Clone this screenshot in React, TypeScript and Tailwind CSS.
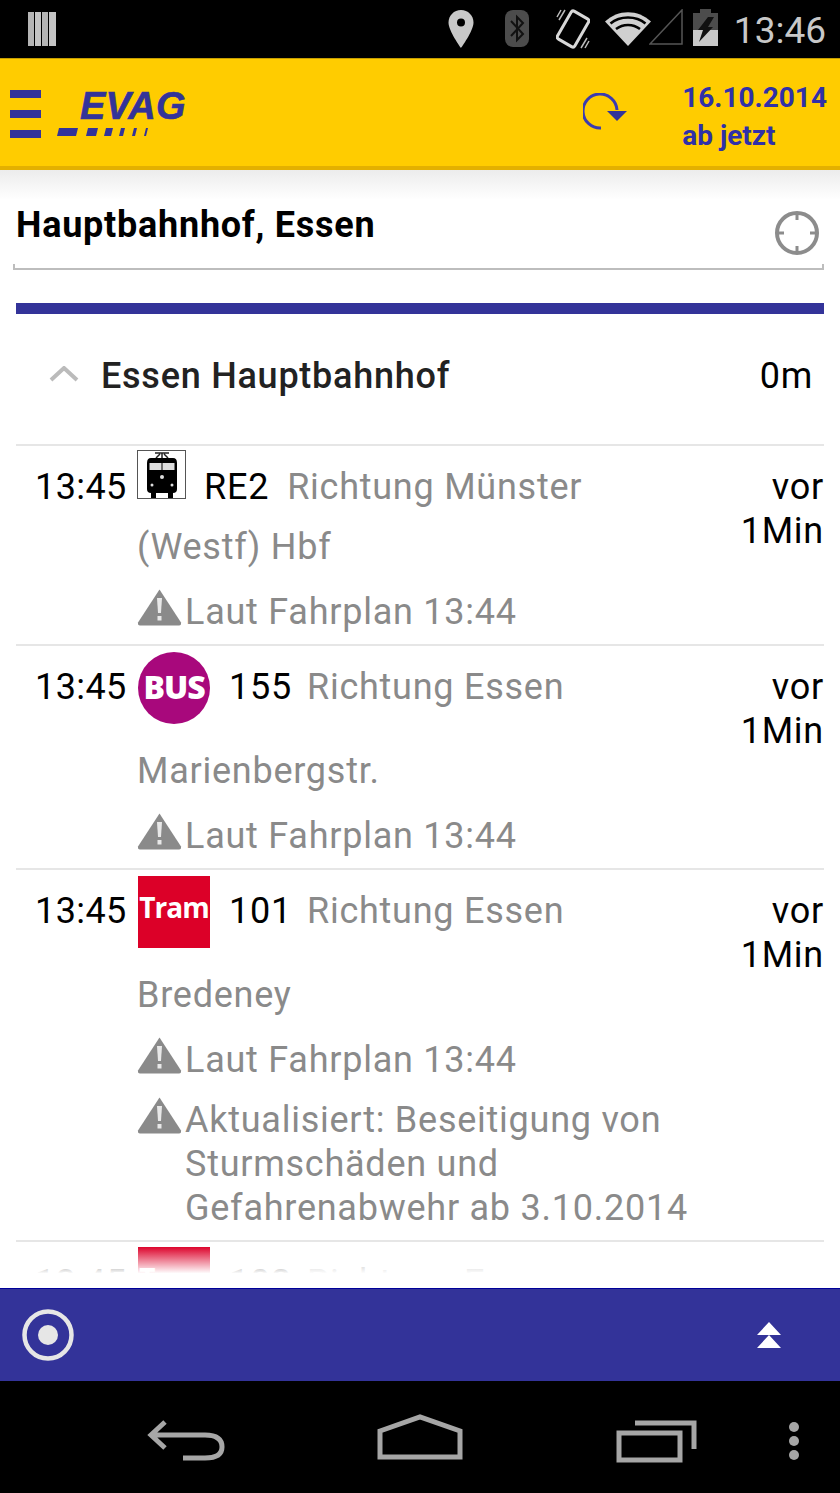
import React from 'react'

const roboto = "font-['Roboto',sans-serif]"

function StatusIcons() {
  return (
    <>
      <svg width="28" height="34" viewBox="0 0 28 34" className="ml-[28px] mt-[12px]">
        <rect x="0" y="0" width="6" height="34" fill="#b5b5b5" />
        <rect x="7" y="0" width="6" height="34" fill="#c4c4c4" />
        <rect x="14" y="0" width="6" height="34" fill="#b5b5b5" />
        <rect x="21" y="0" width="7" height="34" fill="#c4c4c4" />
      </svg>
      <svg width="26" height="38" viewBox="0 0 26 38" className="ml-auto mt-[10px]">
        <path fillRule="evenodd" d="M13 0C6 0 0.5 5.5 0.5 12.500 0.5 21 13 38 13 38S25.500 21 25.500 12.500C25.500 5.500 20 0 13 0ZM13 8.500a4 4 0 1 1 0 8 4 4 0 0 1 0-8Z" fill="#c8c8c8" />
      </svg>
      <svg width="24" height="37" viewBox="0 0 24 37" className="ml-[31px] mt-[10px]">
        <rect width="24" height="37" rx="8" fill="#4c4c4c" />
        <path d="M6 11 L18 24 L12 30 V7 L18 13 L6 26" fill="none" stroke="#111" strokeWidth="2" />
      </svg>
      <svg width="34" height="40" viewBox="0 0 34 40" className="ml-[27px] mt-[9px]">
        <rect x="7" y="4" width="20" height="32" rx="2.500" fill="none" stroke="#d8d8d8" strokeWidth="3" transform="rotate(30 17 20)" />
        <path d="M9 1 L3 11 M5 1 L1 8 M25 39 L31 29 M29 39 L33 32" stroke="#bbb" strokeWidth="1.500" />
      </svg>
      <svg width="46" height="34" viewBox="0 0 46 34" className="ml-[15px] mt-[12px]">
        <path d="M0 9.500 C13 -3 33 -3 46 9.500 L23 34Z" fill="#d0d0d0" />
        <path d="M5.500 11.500 C15 3.500 31 3.500 40.500 11.500 M11 17 C18 11.500 28 11.500 35 17" fill="none" stroke="#000" strokeWidth="2.500" />
      </svg>
      <svg width="34" height="36" viewBox="0 0 34 36" className="mt-[9px] -ml-[2px]">
        <path d="M1 35 L33 1 V35 Z" fill="none" stroke="#555" strokeWidth="1.500" />
      </svg>
      <svg width="25" height="37" viewBox="0 0 25 37" className="ml-[10px] mt-[9px]">
        <rect x="7" y="0" width="11" height="4" fill="#4c4c4c" />
        <rect x="0" y="4" width="25" height="33" fill="#4c4c4c" />
        <rect x="0" y="21" width="25" height="16" fill="#c8c8c8" />
        <path d="M15 8 H21 L15 18 H20 L6 33 L10 21 H5 Z" fill="#111" />
      </svg>
      <span className={`${roboto} text-[37px] leading-[62px] text-[#c8c8c8] ml-[16px] mr-[14px]`}>13:46</span>
    </>
  )
}

function Warning({ lines }: { lines: string[] }) {
  return (
    <div className="flex items-start">
      <svg width="45" height="37" viewBox="0 0 45 37" className="shrink-0 -ml-[1px]">
        <path d="M22.500 0.500 L44 33.500 Q44.500 36.500 42 36.500 H3 Q0.500 36.500 1 33.500 Z" fill="#8a8a8a" />
        <path d="M20 9 H25 L24 24 H21 Z" fill="#e8e8e8" />
        <rect x="20.500" y="27" width="4" height="4.500" fill="#e8e8e8" />
      </svg>
      <div className="ml-[3px] mt-[1px] text-[36px] leading-[44px] tracking-[0.75px] text-[#8a8a8a]">
        {lines.map((line) => (
          <div key={line}>{line}</div>
        ))}
      </div>
    </div>
  )
}

function TrainIcon() {
  return (
    <div className="w-[49px] h-[49px] -ml-[1px] border border-[#555] shrink-0 mt-[4px] flex items-center justify-center">
      <svg width="32" height="46" viewBox="0 0 32 46">
        <path d="M9 1 H23 M16 1 V6 M10 6 L14 2 M22 6 L18 2" stroke="#222" strokeWidth="1.500" fill="none" />
        <path d="M5 6 H27 Q31 6 31 11 V37 Q31 41 27 41 H5 Q1 41 1 37 V11 Q1 6 5 6 Z" fill="#000" />
        <rect x="3.500" y="11" width="12" height="7" fill="#ddd" />
        <rect x="16.500" y="11" width="12" height="7" fill="#ddd" />
        <circle cx="16" cy="25" r="2" fill="#ddd" />
        <circle cx="6" cy="33" r="1.500" fill="#ddd" />
        <circle cx="26" cy="33" r="1.500" fill="#ddd" />
        <rect x="5" y="41" width="5" height="5" fill="#000" />
        <rect x="22" y="41" width="5" height="5" fill="#000" />
      </svg>
    </div>
  )
}

function BusIcon() {
  return (
    <div className="w-[72px] h-[72px] rounded-full bg-[#a8087c] shrink-0 mt-[6px] flex items-center justify-center pb-[2px]">
      <span className="font-['Open_Sans',sans-serif] font-extrabold text-[32px] leading-none tracking-[-1px] text-white">BUS</span>
    </div>
  )
}

function TramIcon() {
  return (
    <div className="w-[72px] h-[72px] bg-[#dc0028] shrink-0 mt-[6px] flex items-center justify-center pb-[11px]">
      <span className="font-['Open_Sans',sans-serif] font-bold text-[28px] leading-none tracking-[-1px] text-white">Tram</span>
    </div>
  )
}

type Departure = {
  icon: React.ReactNode
  line: string
  dest: string
  dest2: string
  firstLine: string
  lineGap: string
  destGap: string
  warnings: string[][]
}

const departures: Departure[] = [
  {
    icon: <TrainIcon />,
    line: 'RE2',
    dest: 'Richtung Münster',
    dest2: '(Westf) Hbf',
    firstLine: 'h-[79px]',
    lineGap: 'ml-[18px]',
    destGap: 'ml-[18px]',
    warnings: [['Laut Fahrplan 13:44']],
  },
  {
    icon: <BusIcon />,
    line: '155',
    dest: 'Richtung Essen',
    dest2: 'Marienbergstr.',
    firstLine: 'h-[103px]',
    lineGap: 'ml-[19px]',
    destGap: 'ml-[15px]',
    warnings: [['Laut Fahrplan 13:44']],
  },
  {
    icon: <TramIcon />,
    line: '101',
    dest: 'Richtung Essen',
    dest2: 'Bredeney',
    firstLine: 'h-[103px]',
    lineGap: 'ml-[19px]',
    destGap: 'ml-[15px]',
    warnings: [
      ['Laut Fahrplan 13:44'],
      ['Aktualisiert: Beseitigung von', 'Sturmschäden und', 'Gefahrenabwehr ab 3.10.2014'],
    ],
  },
]

function DepartureRow({ d }: { d: Departure }) {
  return (
    <div className="flex border-b-2 border-[#e6e6e6] pb-[10px] text-[36px] leading-[44px] tracking-[0.75px]">
      <div className="w-[122px] shrink-0 pt-[19px] pl-[19px] text-black tracking-[0.4px]">13:45</div>
      <div className="flex-1 min-w-0">
        <div className={`flex items-start ${d.firstLine}`}>
          {d.icon}
          <span className={`${d.lineGap} mt-[19px] text-black`}>{d.line}</span>
          <span className={`${d.destGap} mt-[19px] text-[#8a8a8a]`}>{d.dest}</span>
        </div>
        <div className="-ml-[1px] text-[#8a8a8a]">{d.dest2}</div>
        <div className="mt-[20px] flex flex-col gap-[15px]">
          {d.warnings.map((w) => (
            <Warning key={w[0]} lines={w} />
          ))}
        </div>
      </div>
      <div className="shrink-0 pt-[19px] text-right text-black">
        <div>vor</div>
        <div>1Min</div>
      </div>
    </div>
  )
}

export default function App() {
  return (
    <div className={`${roboto} w-[840px] h-[1493px] flex flex-col bg-white overflow-hidden`}>
      <div className="h-[58px] bg-black flex items-start shrink-0">
        <StatusIcons />
      </div>

      <header className="h-[112px] shrink-0 bg-[#ffcc00] border-t border-[#c79f00] border-b-4 border-b-[#e3b000] flex items-center">
        <div className="ml-[10px] flex flex-col gap-[12px] mt-[3px]">
          <div className="w-[31px] h-[8px] bg-[#333399]" />
          <div className="w-[31px] h-[8px] bg-[#333399]" />
          <div className="w-[31px] h-[8px] bg-[#333399]" />
        </div>
        <div className="relative ml-[16px] w-[130px] h-[60px] -mt-[3px]">
          <span className="absolute left-[23px] top-[3px] font-['Liberation_Sans',sans-serif] font-bold italic text-[38px] leading-[44px] tracking-[0.2px] text-[#333399] [-webkit-text-stroke:0.6px_#333399]">EVAG</span>
          <svg width="92" height="12" viewBox="0 0 92 12" className="absolute left-0 top-[46px]">
            <path d="M2 1 H21 L19 9 H0 Z M31 1 H41 L39 9 H29 Z M49 1 H56 L54 9 H47 Z M64 1 H68 L66 9 H62 Z M77 1 H80 L78 9 H75 Z M89 1 H91 L89 9 H87 Z" fill="#333399" />
          </svg>
        </div>
        <svg width="46" height="38" viewBox="0 0 46 38" className="ml-auto mr-[53px] -mt-[2px]">
          <path d="M18 35 A17 17 0 1 1 34 17" fill="none" stroke="#3b3bb0" strokeWidth="3" />
          <path d="M24 18 H44 L34 28 Z" fill="#333399" />
        </svg>
        <div className="mr-[13px] font-bold text-[28px] leading-[38px] text-[#3030a8] mt-[8px]">
          <div>16.10.2014</div>
          <div>ab jetzt</div>
        </div>
      </header>

      <main className="flex-1 min-h-0 flex flex-col overflow-hidden">
        <div className="h-[100px] shrink-0 px-[13px] flex flex-col bg-linear-to-b from-[#ececec] to-white to-[30px]">
          <div className="flex-1 flex items-start">
            <span className="ml-[3px] mt-[33px] font-bold text-[36px] leading-[44px] tracking-[0.75px] text-black">Hauptbahnhof, Essen</span>
            <svg width="46" height="46" viewBox="0 0 46 46" className="ml-auto mr-[7px] mt-[40px]">
              <circle cx="23" cy="23" r="20" fill="none" stroke="#8c8c8c" strokeWidth="4" />
              <path d="M23 2 V10 M23 36 V44 M2 23 H10 M36 23 H44" stroke="#8c8c8c" strokeWidth="3" />
            </svg>
          </div>
          <div className="h-[6px] w-[811px] border-x-2 border-b-2 border-[#bdbdbd]" />
        </div>

        <div className="mx-[16px] mt-[33px] shrink-0">
          <div className="h-[11px] bg-[#333399]" />
          <div className="h-[132px] flex items-center border-b-2 border-[#e6e6e6]">
            <svg width="30" height="16" viewBox="0 0 30 16" className="ml-[33px] -mt-[10px]">
              <path d="M2 14 L15 2 L28 14" fill="none" stroke="#bbbbbb" strokeWidth="4" />
            </svg>
            <span className="ml-[22px] font-medium text-[36px] leading-[44px] tracking-[0.75px] text-[#222] -mt-[7px]">Essen Hauptbahnhof</span>
            <span className="ml-auto mr-[11px] text-[36px] leading-[44px] tracking-[0.75px] text-black -mt-[7px]">0m</span>
          </div>
          {departures.map((d) => (
            <DepartureRow key={d.line} d={d} />
          ))}
          <div className="relative h-[45px] overflow-hidden text-[36px] leading-[44px] tracking-[0.75px]">
            <div className="flex -mt-[1px]">
              <div className="w-[122px] shrink-0 pt-[20px] pl-[19px] text-black tracking-[0.4px]">13:45</div>
              <TramIcon />
              <span className="ml-[19px] mt-[20px] text-black">102</span>
              <span className="ml-[15px] mt-[20px] text-[#8a8a8a]">Richtung Essen</span>
            </div>
            <div className="absolute inset-0 bg-linear-to-b from-white/0 from-[10%] to-white to-[70%]" />
          </div>
        </div>
      </main>

      <footer className="h-[93px] shrink-0 bg-[#333399] border-t border-[#000099] flex items-center justify-between">
        <svg width="52" height="52" viewBox="0 0 52 52" className="ml-[22px]">
          <circle cx="26" cy="26" r="23.500" fill="none" stroke="#e6e6e6" strokeWidth="4.500" />
          <circle cx="26" cy="26" r="10" fill="#e6e6e6" />
        </svg>
        <svg width="26" height="26" viewBox="0 0 26 26" className="mr-[58px]">
          <path d="M13 0 L25 13 H1 Z M13 13 L25 26 H1 Z" fill="#fff" />
        </svg>
      </footer>

      <nav className="h-[112px] shrink-0 bg-black flex items-start">
        <svg width="80" height="44" viewBox="0 0 80 44" className="ml-[147px] mt-[38px]">
          <path d="M18 3 L4 16 L18 29 M4 16 H58 Q75 16 75 28 Q75 39 58 39 H36" fill="none" stroke="#a6a6a6" strokeWidth="5" />
        </svg>
        <svg width="88" height="48" viewBox="0 0 88 48" className="ml-[149px] mt-[33px]">
          <path d="M4 17 L44 3 L84 17 V43 H4 Z" fill="none" stroke="#a6a6a6" strokeWidth="5" />
        </svg>
        <svg width="82" height="46" viewBox="0 0 82 46" className="ml-[152px] mt-[38px]">
          <path d="M19 4 H78 V30" fill="none" stroke="#a6a6a6" strokeWidth="5" />
          <rect x="3" y="14" width="61" height="27" fill="none" stroke="#a6a6a6" strokeWidth="5" />
        </svg>
        <svg width="10" height="38" viewBox="0 0 10 38" className="ml-[91px] mt-[41px]">
          <circle cx="5" cy="5" r="5" fill="#a6a6a6" />
          <circle cx="5" cy="19" r="5" fill="#a6a6a6" />
          <circle cx="5" cy="33" r="5" fill="#a6a6a6" />
        </svg>
      </nav>
    </div>
  )
}
